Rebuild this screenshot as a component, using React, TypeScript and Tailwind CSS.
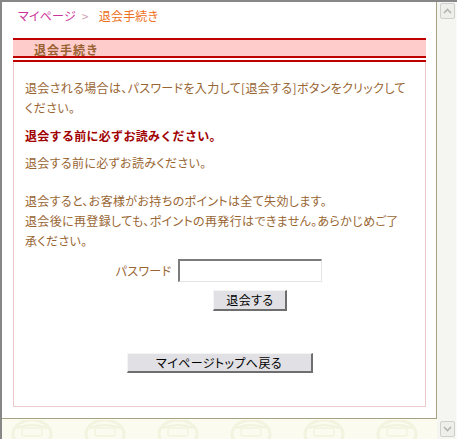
import React from 'react';

const brown = 'text-[#996633]';

// faint emblem repeated in the page background strip
const Emblem = () => (
  <svg width="46" height="20" viewBox="0 0 46 20" className="shrink-0">
    <ellipse cx="23" cy="14" rx="19" ry="14" fill="none" stroke="#f3f3e0" strokeWidth="3" />
    <path d="M8 8 Q23 2 38 8" fill="none" stroke="#f2f2de" strokeWidth="2" />
    <rect x="13" y="8" width="20" height="8" rx="2" fill="none" stroke="#f3f3e0" strokeWidth="1.5" />
  </svg>
);

const ScrollBtn = ({ up }: { up: boolean }) => (
  <div className="w-[15px] h-[16px] rounded-[2px] border border-[#cfd0cc] bg-[#eeeeeb] flex items-center justify-center">
    <svg width="9" height="6" viewBox="0 0 9 6">
      <path d={up ? 'M1 5 L4.5 1.5 L8 5' : 'M1 1 L4.5 4.5 L8 1'} fill="none" stroke="#b4b4b0" strokeWidth="1.6" />
    </svg>
  </div>
);

const OldButton = ({ label, className }: { label: string; className: string }) => (
  <button
    className={`bg-[#e1e0e4] border-t border-l border-t-[#f4f4f4] border-l-[#f4f4f4] border-r-2 border-b-2 border-r-[#6e6e6e] border-b-[#6e6e6e] text-black text-[12px] leading-none tracking-[0.4px] flex items-center justify-center ${className}`}
  >
    {label}
  </button>
);

export default function App() {
  return (
    <div className="w-[457px] h-[439px] overflow-hidden flex border-t-2 border-l-2 border-[#878787] bg-white font-['Noto_Sans_CJK_JP','Liberation_Sans',sans-serif] [font-feature-settings:'palt'] text-[12px]">
      <div className="w-[435px] flex flex-col shrink-0">
        {/* page */}
        <div className="h-[417px] shrink-0 border-r border-b border-[#a8a284] pl-[11px] pr-[10px] bg-white">
          <div className="pt-[4px] pl-[5px] leading-[20px] flex items-center tracking-[0.2px]">
            <span className="text-[#cc3399]">マイページ</span>
            <span className="text-[#d0a3b6] ml-[6px]">&gt;</span>
            <span className="text-[#ee7020] ml-[10px]">退会手続き</span>
          </div>

          <div className="mt-[12px]">
            <div className="h-[20px] box-border border-y-2 border-[#bf0000] bg-[#ffcccc] pl-[21px] pt-[2px] leading-[16px] font-bold text-[#9a6232] tracking-[1px] [font-feature-settings:normal]">
              退会手続き
            </div>
            <div className="h-[2px] bg-white" />
            <div className="h-[2px] bg-[#bf0000]" />
          </div>

          <div className={`h-[345px] border-x border-b border-[#ecc9cc] pl-[11px] pr-[4px] pt-[16px] leading-[20px] tracking-[0.35px] ${brown}`}>
            <p>
              退会される場合は、パスワードを入力して[退会する]ボタンをクリックして
              <br />
              ください。
            </p>
            <p className="mt-[8px] font-bold text-[#a00000] tracking-[0.3px] [font-feature-settings:normal]">
              退会する前に必ずお読みください。
            </p>
            <p className="mt-[7px]">退会する前に必ずお読みください。</p>
            <p className="mt-[18px]">
              退会すると、お客様がお持ちのポイントは全て失効します。
              <br />
              退会後に再登録しても、ポイントの再発行はできません。あらかじめご了
              <br />
              承ください。
            </p>

            <div className="mt-[8px] grid grid-cols-[auto_144px] justify-center gap-x-[7px] gap-y-[8px] -translate-x-[4px]">
              <label className="self-center leading-[23px]">パスワード</label>
              <input
                type="password"
                className="h-[23px] w-[144px] bg-white border-t-2 border-l-2 border-t-[#7c7c7c] border-l-[#7c7c7c] border-r border-b border-r-[#e4e4e4] border-b-[#e4e4e4] outline-none"
              />
              <span />
              <OldButton label="退会する" className="justify-self-center w-[74px] h-[21px]" />
            </div>

            <div className="mt-[42px] flex justify-center pr-[7px]">
              <OldButton label="マイページトップへ戻る" className="w-[186px] h-[20px]" />
            </div>
          </div>
        </div>

        {/* body background strip */}
        <div className="flex-1 bg-[#fbfbf0] flex items-start gap-[27px] pl-[7px] pt-[1px] overflow-hidden">
          {[0, 1, 2, 3, 4, 5].map((i) => (
            <Emblem key={i} />
          ))}
        </div>
      </div>

      {/* scrollbar */}
      <div className="w-[20px] shrink-0 bg-[#f5f5f1] border-r border-[#fbfbfb] flex flex-col justify-between pl-[3px] pt-[1px] pb-[2px]">
        <ScrollBtn up />
        <ScrollBtn up={false} />
      </div>
    </div>
  );
}
